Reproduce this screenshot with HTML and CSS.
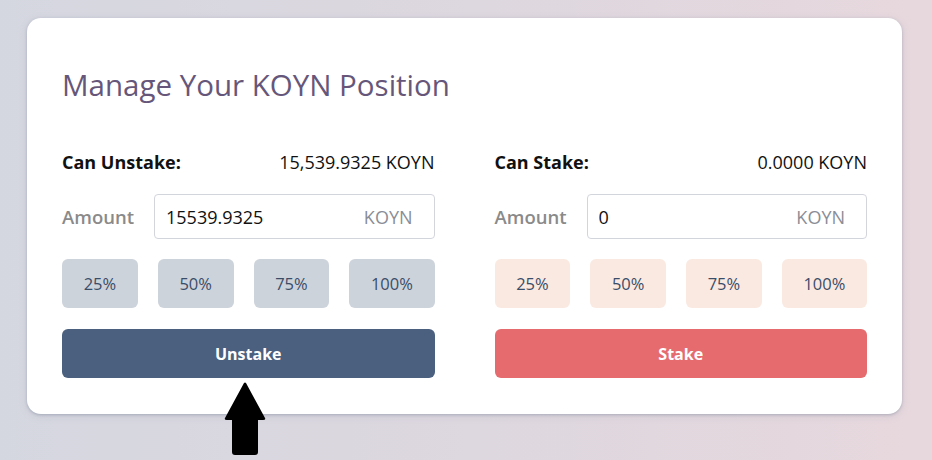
FILE: index.html
```html
<!DOCTYPE html>
<html>
<head>
<meta charset="utf-8">
<link rel="stylesheet" href="styles.css">
</head>
<body>
<div class="card">
  <h1 class="title">Manage Your KOYN Position</h1>
  <div class="cols">
    <div class="col">
      <div class="info"><span class="info-label">Can Unstake:</span><span class="info-value">15,539.9325 KOYN</span></div>
      <div class="amount-row">
        <span class="amount-label">Amount</span>
        <div class="field"><input class="field-input" value="15539.9325"><span class="field-unit">KOYN</span></div>
      </div>
      <div class="pcts">
        <button class="pct pct-gray">25%</button>
        <button class="pct pct-gray">50%</button>
        <button class="pct pct-gray">75%</button>
        <button class="pct pct-gray">100%</button>
      </div>
      <div class="action-wrap">
        <button class="action action-unstake">Unstake</button>
        <svg class="arrow" width="44" height="74" viewBox="0 0 44 74"><path d="M21 1 Q22 0 23 1 L42 36 Q43 38 40 38 L35 38 L35 70 Q35 73 32 73 L12 73 Q9 73 9 70 L9 38 L4 38 Q1 38 2 36 Z" fill="#000"/></svg>
      </div>
    </div>
    <div class="col">
      <div class="info"><span class="info-label">Can Stake:</span><span class="info-value">0.0000 KOYN</span></div>
      <div class="amount-row">
        <span class="amount-label">Amount</span>
        <div class="field"><input class="field-input" value="0"><span class="field-unit">KOYN</span></div>
      </div>
      <div class="pcts">
        <button class="pct pct-peach">25%</button>
        <button class="pct pct-peach">50%</button>
        <button class="pct pct-peach">75%</button>
        <button class="pct pct-peach">100%</button>
      </div>
      <div class="action-wrap">
        <button class="action action-stake">Stake</button>
      </div>
    </div>
  </div>
</div>
</body>
</html>
```
FILE: styles.css
```css
* { box-sizing: border-box; }
html, body { height: 100%; }
body {
  margin: 0;
  padding: 18px 0 0 27px;
  background: linear-gradient(90deg, #d5d7e0 0%, #ddd7df 50%, #e7d8dd 100%);
  font-family: "Open Sans", "Noto Sans", sans-serif;
  overflow: hidden;
}
.card {
  width: 875px;
  height: 396px;
  background: #fff;
  border-radius: 14px;
  padding: 36px 35px;
  box-shadow: 0 1px 3px rgba(120, 130, 150, 0.45), 0 2px 8px rgba(120, 130, 150, 0.15);
}
.title {
  margin: 0;
  font-size: 29.5px;
  font-weight: 500;
  line-height: 62px;
  height: 62px;
  color: #66577a;
  letter-spacing: 0;
}
.cols {
  display: flex;
  gap: 60px;
  margin-top: 34px;
}
.col {
  flex: 1 1 0;
  min-width: 0;
  display: flex;
  flex-direction: column;
}
.info {
  display: flex;
  justify-content: space-between;
  align-items: baseline;
  font-size: 18px;
  line-height: 24px;
  color: #111;
}
.info-label { font-weight: 700; }
.amount-row {
  display: flex;
  align-items: center;
  gap: 20px;
  margin-top: 20px;
}
.amount-label {
  font-size: 18.5px;
  font-weight: 600;
  color: #8a8a8a;
}
.field {
  flex: 1 1 0;
  min-width: 0;
  height: 45px;
  display: flex;
  align-items: center;
  border: 1px solid #d3d5dc;
  border-radius: 4px;
  padding: 0 21px 0 11px;
}
.field-input {
  flex: 1 1 0;
  min-width: 0;
  width: 0;
  border: 0;
  outline: 0;
  padding: 0;
  font-family: inherit;
  font-size: 18px;
  color: #111;
  background: transparent;
}
.field-unit {
  font-size: 18px;
  color: #8a8d96;
}
.pcts {
  display: flex;
  gap: 20px;
  margin-top: 20px;
}
.pct {
  flex: 1 1 auto;
  height: 49px;
  border: 0;
  border-radius: 6px;
  font-family: inherit;
  font-size: 16.5px;
  color: #3a4d68;
}
.pct-gray { background: #cdd3db; }
.pct-peach { background: #fae9e1; }
.action-wrap {
  position: relative;
  margin-top: 21px;
}
.action {
  width: 100%;
  height: 49px;
  border: 0;
  border-radius: 6px;
  font-family: inherit;
  font-size: 16px;
  font-weight: 700;
  color: #fff;
}
.action-unstake { background: #4a607e; }
.action-stake { background: #e56b6e; }
.arrow {
  position: absolute;
  left: 161px;
  top: 53px;
}
```
